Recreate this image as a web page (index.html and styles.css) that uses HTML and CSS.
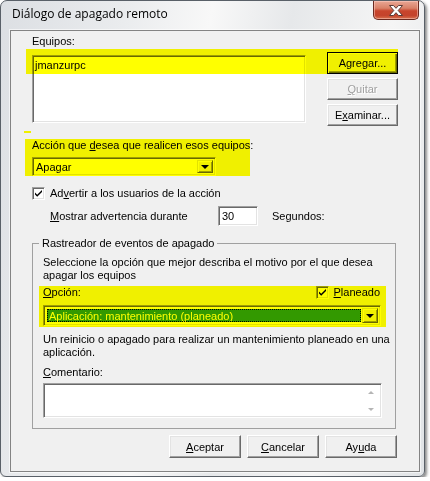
FILE: index.html
```html
<!DOCTYPE html>
<html lang="es">
<head>
  <meta charset="UTF-8">
  <title>Diálogo de apagado remoto</title>
  <link rel="stylesheet" href="styles.css">
</head>
<body>
  <div class="window">
    <!-- Title bar -->
    <div class="titlebar">
      <span class="title">Diálogo de apagado remoto</span>
      <div class="close-btn">
        <svg width="16" height="11" viewBox="0 0 16 11">
          <path d="M1.5 0.5h4l2.5 2.8 2.5-2.8h4l-4.3 5 4.3 5h-4l-2.5-2.8-2.5 2.8h-4l4.3-5z" fill="#fff" stroke="#5a3a36" stroke-width="1"/>
        </svg>
      </div>
    </div>

    <!-- Client area -->
    <div class="client">
      <div class="label first">Equipos:</div>
      <div class="list-row">
        <div class="listbox">
          <div class="list-item">jmanzurpc</div>
        </div>
        <div class="side-buttons">
          <button class="btn default">Agre<u>g</u>ar...</button>
          <button class="btn" disabled><u>Q</u>uitar</button>
          <button class="btn">E<u>x</u>aminar...</button>
        </div>
      </div>

      <div class="label action-label">Acción que <u>d</u>esea que realicen esos equipos:</div>
      <div class="combo action-combo">
        <span class="combo-text">Apagar</span>
        <span class="combo-arrow"><span class="tri"></span></span>
      </div>

      <div class="check-row">
        <span class="checkbox"><svg width="9" height="9" viewBox="0 0 9 9"><path d="M1 3.5l2.2 2.3 4.8-4.8v2l-4.8 4.8-2.2-2.3z" fill="#000"/></svg></span>
        <span>Ad<u>v</u>ertir a los usuarios de la acción</span>
      </div>

      <div class="warn-row">
        <span class="warn-text"><u>M</u>ostrar advertencia durante</span>
        <span class="edit seconds">30</span>
        <span class="seconds-label">Segundos:</span>
      </div>

      <fieldset class="group">
        <legend>Rastreador de eventos de apagado</legend>
        <p class="desc">Seleccione la opción que mejor describa el motivo por el que desea<br>apagar los equipos</p>
        <div class="option-row">
          <span><u>O</u>pción:</span>
          <span class="planned">
            <span class="checkbox"><svg width="9" height="9" viewBox="0 0 9 9"><path d="M1 3.5l2.2 2.3 4.8-4.8v2l-4.8 4.8-2.2-2.3z" fill="#000"/></svg></span>
            <span><u>P</u>laneado</span>
          </span>
        </div>
        <div class="combo reason-combo">
          <span class="combo-text"><span class="selected">Aplicación: mantenimiento (planeado)</span></span>
          <span class="combo-arrow"><span class="tri"></span></span>
        </div>
        <p class="desc second">Un reinicio o apagado para realizar un mantenimiento planeado en una<br>aplicación.</p>
        <div class="label comment-label"><u>C</u>omentario:</div>
        <div class="memo">
          <div class="memo-scroll">
            <span class="tri-up"></span>
            <span class="tri-down"></span>
          </div>
        </div>
      </fieldset>

      <div class="footer">
        <button class="btn wide"><u>A</u>ceptar</button>
        <button class="btn wide"><u>C</u>ancelar</button>
        <button class="btn wide">Ay<u>u</u>da</button>
      </div>
    </div>

    <!-- Highlight marks drawn over the dialog -->
    <div class="mark mark-list"></div>
    <div class="mark mark-dash"></div>
    <div class="mark mark-action"></div>
    <div class="mark mark-option"></div>
  </div>
</body>
</html>
```

FILE: styles.css
```css
/* styles.css */

:root {
  --face: #f0f0f0;
  --shadow: #a0a0a0;
  --dark-shadow: #696969;
  --light: #e3e3e3;
  --highlight: #ffffff;
  --mark: #ffff00;
}

body {
  margin: 0;
  background: #ffffff;
  font-family: "Liberation Sans", Arial, sans-serif;
  font-size: 11px;
  color: #000;
}

u {
  text-decoration: underline;
  text-underline-offset: 1px;
}

/* Window frame */
.window {
  position: relative;
  width: 425px;
  height: 477px;
  box-sizing: border-box;
  border: 1px solid #596068;
  border-radius: 7px 7px 6px 6px;
  background: linear-gradient(100deg, #dcdfe3 0%, #eaecee 25%, #f8f8f8 42%, #e6e8ea 58%, #f5f5f5 78%, #e0e3e6 100%);
  box-shadow: 2px 2px 3px rgba(0, 0, 0, 0.45);
}

.titlebar {
  height: 29px;
  display: flex;
  justify-content: space-between;
  align-items: flex-start;
  padding: 0 5px 0 11px;
}

.title {
  font-family: "Open Sans", "Noto Sans", sans-serif;
  font-size: 12px;
  line-height: 16px;
  padding-top: 5px;
  color: #000;
}

.close-btn {
  width: 46px;
  height: 19px;
  box-sizing: border-box;
  border: 1px solid #6b2a20;
  border-top: none;
  border-radius: 0 0 5px 5px;
  background: linear-gradient(#e9a795 0%, #d98168 40%, #c8452d 55%, #c4432c 80%, #d6714f 100%);
  display: flex;
  justify-content: center;
  align-items: center;
  box-shadow: inset 0 0 0 1px rgba(255, 210, 200, 0.5);
}

.client {
  margin-left: 9px;
  width: 410px;
  height: 442px;
  box-sizing: border-box;
  border: 1px solid #838383;
  background: var(--face);
  padding: 0 21px;
  box-shadow: 0 0 0 1px rgba(255, 255, 255, 0.6);
}

.label {
  line-height: 13px;
}

.label.first {
  margin-top: 4px;
}

/* Sunken fields */
.listbox,
.combo,
.edit,
.memo,
.checkbox {
  box-sizing: border-box;
  background: #fff;
  border: 1px solid;
  border-color: var(--shadow) var(--highlight) var(--highlight) var(--shadow);
  box-shadow: inset 1px 1px var(--dark-shadow), inset -1px -1px var(--light);
}

.list-row {
  margin-top: 4px;
  display: flex;
  justify-content: space-between;
  align-items: flex-start;
}

.listbox {
  width: 274px;
  height: 68px;
  margin-top: 3px;
  padding: 3px 2px;
}

.list-item {
  line-height: 13px;
}

.side-buttons {
  display: flex;
  flex-direction: column;
  gap: 4px;
}

/* Classic push buttons */
.btn {
  width: 71px;
  height: 22px;
  padding: 0;
  box-sizing: border-box;
  background: var(--face);
  font-family: inherit;
  font-size: 11px;
  color: #000;
  border: 1px solid;
  border-color: var(--highlight) var(--dark-shadow) var(--dark-shadow) var(--highlight);
  box-shadow: inset -1px -1px var(--shadow), inset 1px 1px var(--light);
}

.btn.default {
  border: 1px solid #000;
  box-shadow: inset 1px 1px var(--highlight), inset -1px -1px var(--dark-shadow), inset -2px -2px var(--shadow);
}

.btn:disabled {
  color: var(--shadow);
  text-shadow: 1px 1px #fff;
}

.btn.wide {
  height: 23px;
  width: 72px;
}

.action-label {
  margin-top: 13px;
}

/* Combo boxes */
.combo {
  display: flex;
  align-items: stretch;
  padding: 2px;
}

.combo-text {
  flex: 1;
  display: flex;
  align-items: center;
  padding-left: 1px;
}

.combo-arrow {
  width: 16px;
  box-sizing: border-box;
  background: var(--face);
  border: 1px solid;
  border-color: var(--light) var(--dark-shadow) var(--dark-shadow) var(--light);
  box-shadow: inset 1px 1px #fff, inset -1px -1px var(--shadow);
  display: flex;
  justify-content: center;
  align-items: center;
}

.tri {
  width: 0;
  height: 0;
  border-left: 4px solid transparent;
  border-right: 4px solid transparent;
  border-top: 4px solid #000;
  margin-top: 1px;
}

.action-combo {
  margin-top: 5px;
  width: 184px;
  height: 19px;
}

/* Checkboxes */
.checkbox {
  width: 13px;
  height: 13px;
  flex: none;
  display: flex;
  justify-content: center;
  align-items: center;
}

.check-row {
  margin-top: 11px;
  display: flex;
  align-items: center;
  gap: 5px;
  line-height: 13px;
}

.warn-row {
  margin-top: 6px;
  height: 20px;
  display: flex;
  align-items: center;
  padding-left: 18px;
}

.warn-text {
  width: 168px;
}

.edit.seconds {
  width: 40px;
  height: 20px;
  padding: 2px 3px;
  line-height: 14px;
}

.seconds-label {
  margin-left: 14px;
}

/* Group box */
.group {
  margin: 11px 0 0;
  width: 364px;
  min-width: 0;
  box-sizing: border-box;
  border: 1px solid var(--shadow);
  padding: 6px 10px 10px;
}

.group legend {
  padding: 0 3px;
  margin-left: -4px;
  line-height: 13px;
}

.desc {
  margin: 0;
  line-height: 13px;
  white-space: nowrap;
}

.desc.second {
  margin-top: 7px;
}

.option-row {
  margin-top: 4px;
  display: flex;
  justify-content: space-between;
  align-items: center;
  line-height: 13px;
  padding-right: 5px;
}

.planned {
  display: flex;
  align-items: center;
  gap: 5px;
}

.reason-combo {
  margin-top: 6px;
  width: 338px;
  height: 21px;
}

.reason-combo .combo-text {
  padding: 1px;
}

.selected {
  flex: 1;
  align-self: stretch;
  display: flex;
  align-items: center;
  background: #3399ff;
  color: #fff;
  outline: 1px dotted #000;
  outline-offset: -1px;
  padding-left: 2px;
}

.comment-label {
  margin-top: 7px;
}

.memo {
  margin-top: 4px;
  width: 339px;
  height: 35px;
  display: flex;
  justify-content: flex-end;
  padding: 2px;
}

.memo-scroll {
  width: 16px;
  display: flex;
  flex-direction: column;
  justify-content: space-between;
  align-items: center;
  padding: 5px 0 4px;
}

.tri-up,
.tri-down {
  width: 0;
  height: 0;
  border-left: 3px solid transparent;
  border-right: 3px solid transparent;
}

.tri-up {
  border-bottom: 3px solid #b5b5b5;
}

.tri-down {
  border-top: 3px solid #b5b5b5;
}

.footer {
  margin-top: 6px;
  display: flex;
  justify-content: flex-end;
  gap: 6px;
  padding-right: 1px;
}

/* Yellow highlight marks over the dialog */
.mark {
  position: absolute;
  background: var(--mark);
  mix-blend-mode: multiply;
  pointer-events: none;
}

.mark-list {
  left: 25px;
  top: 48px;
  width: 372px;
  height: 25px;
}

.mark-dash {
  left: 23px;
  top: 130px;
  width: 7px;
  height: 2px;
}

.mark-action {
  left: 24px;
  top: 138px;
  width: 225px;
  height: 37px;
}

.mark-option {
  left: 38px;
  top: 285px;
  width: 347px;
  height: 41px;
}
```
